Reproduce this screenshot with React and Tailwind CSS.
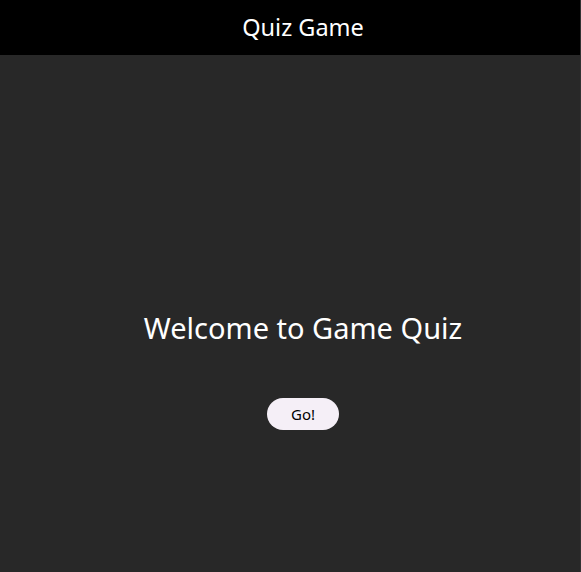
import React from 'react';

const App = () => {
  return (
    <div className="w-full h-[572px] overflow-hidden bg-[#282828] border-r border-[#333]" style={{ fontFamily: '"Noto Sans", "Open Sans", sans-serif' }}>
      <div className="w-[606px]">
        {/* Header */}
        <header className="h-[55px] bg-black flex items-center justify-center">
          <h1 className="text-white text-[23.5px] leading-none">Quiz Game</h1>
        </header>

        {/* Start screen */}
        <main className="flex flex-col items-center pt-[253px]">
          <h2 className="text-white text-[29px] leading-[40px]">Welcome to Game Quiz</h2>
          <button className="mt-[50px] w-[72px] h-[32px] rounded-full bg-[#f5eff7] text-black text-[15px]">
            Go!
          </button>
        </main>
      </div>
    </div>
  );
};

export default App;
